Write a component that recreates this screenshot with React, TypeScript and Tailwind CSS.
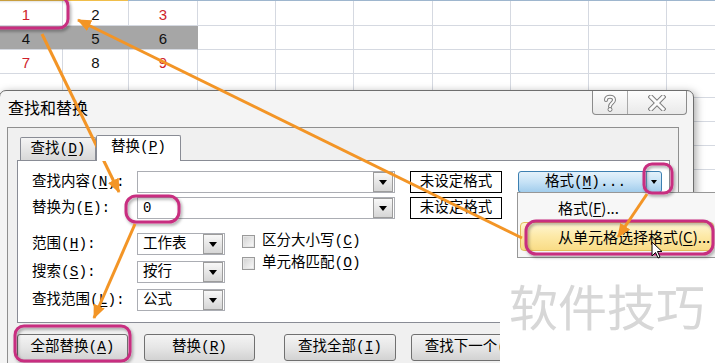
import React from "react";

const SONG = "font-['Liberation_Mono','Noto_Sans_CJK_SC',monospace]";
const HEI = "font-['Noto_Sans_CJK_SC',sans-serif]";

const COLS = [
  "w-[73px] -ml-[10px]",
  "w-[66px]",
  "w-[69px]",
  "w-[78px]",
  "w-[78px]",
  "w-[79px]",
  "w-[78px]",
  "w-[78px]",
  "w-[78px]",
  "w-[78px]",
];

type Cell = { t: string; red?: boolean };
const DATA: Cell[][] = [
  [{ t: "1", red: true }, { t: "2" }, { t: "3", red: true }],
  [{ t: "4" }, { t: "5" }, { t: "6" }],
  [{ t: "7", red: true }, { t: "8" }, { t: "9", red: true }],
];

function Sheet() {
  const rows = Array.from({ length: 15 }, (_, i) => i);
  return (
    <div className="flex flex-col">
      <div className="flex h-px">
        <div className="-ml-[10px] w-[138px] bg-[#f0be4a]" />
        <div className="flex-1 bg-[#9eb6ce]" />
      </div>
      {rows.map((r) => (
        <div key={r} className={`flex ${r === 0 ? "h-[25px]" : "h-[24px]"}`}>
          {COLS.map((c, ci) => {
            const cell = DATA[r]?.[ci];
            const gray = r === 1 && ci < 3;
            return (
              <div
                key={ci}
                className={`${c} shrink-0 flex items-center justify-center border-b border-r pt-[2px] font-['Liberation_Sans',sans-serif] text-[15px] leading-none ${
                  gray ? "bg-[#a6a6a6] border-r-[#a6a6a6] border-b-[#d5d9e1]" : "border-[#d5d9e1]"
                } ${cell?.red ? "text-[#cf1f2b]" : "text-[#111]"}`}
              >
                {cell?.t ?? ""}
              </div>
            );
          })}
        </div>
      ))}
    </div>
  );
}

function U({ c }: { c: string }) {
  return <span className="underline underline-offset-[2px]">{c}</span>;
}

function Tri() {
  return (
    <svg width="8" height="5" viewBox="0 0 8 5">
      <path d="M0 0H8L4 5Z" fill="#000" />
    </svg>
  );
}

function DropBtn() {
  return (
    <div className="flex h-[20px] w-[20px] shrink-0 items-center justify-center border border-[#9c9c9c] bg-linear-to-b from-[#f8f8f8] to-[#d6d6d6]">
      <Tri />
    </div>
  );
}

function HelpIcon() {
  return (
    <svg width="16" height="18" viewBox="0 0 16 18">
      <path d="M4 6 C4 1.5, 12 1.5, 12 6 C12 9, 8 9, 8 12.5" fill="none" stroke="#7d7d7d" strokeWidth="4" strokeLinecap="round" />
      <path d="M4 6 C4 1.5, 12 1.5, 12 6 C12 9, 8 9, 8 12.5" fill="none" stroke="#fbfbfb" strokeWidth="2" strokeLinecap="round" />
      <circle cx="8" cy="15.5" r="2" fill="#fbfbfb" stroke="#7d7d7d" strokeWidth="1" />
    </svg>
  );
}

function CloseIcon() {
  return (
    <svg width="18" height="16" viewBox="0 0 18 16">
      <path d="M3 2 L15 14 M15 2 L3 14" fill="none" stroke="#7d7d7d" strokeWidth="5" strokeLinecap="square" />
      <path d="M3 2 L15 14 M15 2 L3 14" fill="none" stroke="#fbfbfb" strokeWidth="3" strokeLinecap="square" />
    </svg>
  );
}

function Checkbox({ children }: { children: React.ReactNode }) {
  return (
    <div className="flex h-[22px] items-center">
      <div className="flex h-[13px] w-[13px] items-center justify-center border border-[#9a9a9a] bg-[#e6e6e6]">
        <div className="h-[9px] w-[9px] bg-linear-to-br from-[#d4d4d4] to-[#f7f7f7]" />
      </div>
      <span className="ml-[7px] text-[14.5px] leading-none text-black">{children}</span>
    </div>
  );
}

function Select({ value }: { value: string }) {
  return (
    <div className="flex h-[22px] w-[88px] items-center justify-between border border-[#abadb3] bg-white pl-[5px] pr-px">
      <span className="text-[14.5px] leading-none text-black">{value}</span>
      <DropBtn />
    </div>
  );
}

function Btn({ children, w }: { children: React.ReactNode; w: string }) {
  return (
    <div
      className={`${w} flex h-[27px] shrink-0 items-center justify-center whitespace-nowrap rounded-[3px] border border-[#707070] bg-linear-to-b from-[#f4f4f4] via-[#e6e6e6] to-[#d2d2d2] text-[14.5px] leading-none text-black`}
    >
      {children}
    </div>
  );
}

function Dialog() {
  return (
    <div
      className={`absolute left-[-1px] top-[90px] h-[290px] w-[695px] rounded-t-[7px] border border-[#6e6e6e] bg-[#f4f4f4] shadow-[2px_2px_8px_rgba(0,0,0,0.35)] ${SONG}`}
    >
      {/* title bar */}
      <div className="flex h-[36px] items-start">
        <span className={`ml-[8px] mt-[8px] text-[16px] leading-none text-black ${HEI}`}>查找和替换</span>
        <div className="ml-auto mr-[6px] flex h-[24px] overflow-hidden rounded-b-[4px] border border-t-0 border-[#8c8c8c] bg-linear-to-b from-[#fdfdfd] to-[#e9e9e9]">
          <div className="flex w-[35px] items-center justify-center border-r border-[#a9a9a9]">
            <HelpIcon />
          </div>
          <div className="flex w-[58px] items-center justify-center">
            <CloseIcon />
          </div>
        </div>
      </div>

      {/* client area */}
      <div className="ml-[7px] h-[260px] w-[672px] border border-b-0 border-[#8f8f8f] bg-[#f0f0f0]">
        {/* tabs */}
        <div className="flex h-[32px] items-end">
          <div className="ml-[12px] flex h-[23px] w-[76px] items-center justify-center rounded-t-[2px] border border-b-0 border-[#898c95] bg-linear-to-b from-[#f4f4f4] to-[#d8d8d8] text-[14.5px] leading-none text-black">
            查找(<U c="D" />)
          </div>
          <div className="relative z-10 -mb-px flex h-[26px] w-[85px] items-center justify-center rounded-t-[2px] border border-b-0 border-[#898c95] bg-white pb-[2px] text-[14.5px] leading-none text-black">
            替换(<U c="P" />)
          </div>
        </div>

        {/* panel */}
        <div className="ml-[9px] h-[163px] w-[653px] border border-[#898c95] bg-white pl-[14px] pt-[10px] text-black">
          {/* row 1 */}
          <div className="flex h-[22px] items-center">
            <span className="w-[105px] text-[14.5px] leading-none">
              查找内容(<U c="N" />):
            </span>
            <div className="flex h-[22px] w-[258px] items-center justify-end border border-[#abadb3] bg-white pr-px">
              <DropBtn />
            </div>
            <div className="ml-[15px] flex h-[22px] w-[92px] items-center justify-center border border-black bg-white text-[14.5px] leading-none">
              未设定格式
            </div>
            <div className="ml-[16px] flex h-[22px] w-[144px] overflow-hidden rounded-[3px] border border-[#3c7fb1] bg-linear-to-b from-[#e4f1fb] via-[#c6e2f6] to-[#a2cdec]">
              <div className="flex flex-1 items-center justify-center pl-[6px] text-[14.5px] leading-none">
                格式(<U c="M" />)...
              </div>
              <div className="flex w-[15px] items-center justify-center border-l border-[#6a9fc7]">
                <svg width="6" height="4" viewBox="0 0 6 4">
                  <path d="M0 0H6L3 4Z" fill="#000" />
                </svg>
              </div>
            </div>
          </div>
          {/* row 2 */}
          <div className="mt-[4px] flex h-[22px] items-center">
            <span className="w-[105px] text-[14.5px] leading-none">
              替换为(<U c="E" />):
            </span>
            <div className="flex h-[22px] w-[258px] items-center justify-between border border-[#abadb3] bg-white pl-[5px] pr-px">
              <span className="text-[14px] leading-none">0</span>
              <DropBtn />
            </div>
            <div className="ml-[15px] flex h-[22px] w-[92px] items-center justify-center border border-black bg-white text-[14.5px] leading-none">
              未设定格式
            </div>
          </div>
          {/* options */}
          <div className="mt-[14px] flex">
            <div className="flex flex-col gap-[6px]">
              <div className="flex items-center">
                <span className="w-[105px] text-[14.5px] leading-none">
                  范围(<U c="H" />):
                </span>
                <Select value="工作表" />
              </div>
              <div className="flex items-center">
                <span className="w-[105px] text-[14.5px] leading-none">
                  搜索(<U c="S" />):
                </span>
                <Select value="按行" />
              </div>
              <div className="flex items-center">
                <span className="w-[105px] text-[14.5px] leading-none">
                  查找范围(<U c="L" />):
                </span>
                <Select value="公式" />
              </div>
            </div>
            <div className="-mt-[3px] ml-[17px] flex flex-col">
              <Checkbox>
                区分大小写(<U c="C" />)
              </Checkbox>
              <Checkbox>
                单元格匹配(<U c="O" />)
              </Checkbox>
            </div>
          </div>
        </div>

        {/* buttons */}
        <div className="ml-[9px] mt-[11px] flex">
          <Btn w="w-[111px]">
            全部替换(<U c="A" />)
          </Btn>
          <div className="ml-[16px]">
            <Btn w="w-[111px]">
              替换(<U c="R" />)
            </Btn>
          </div>
          <div className="ml-[29px]">
            <Btn w="w-[112px]">
              查找全部(<U c="I" />)
            </Btn>
          </div>
          <div className="ml-[15px]">
            <Btn w="w-[126px]">
              查找下一个(<U c="F" />)
            </Btn>
          </div>
        </div>
      </div>
    </div>
  );
}

function Menu() {
  return (
    <div className={`absolute left-[517px] top-[192px] h-[66px] w-[210px] border border-[#979797] bg-[#f7f7f7] ${HEI}`}>
      <div className="flex h-[29px] items-center pl-[40px] text-[15px] leading-none text-black">
        格式(<span className="underline underline-offset-[2px]">F</span>)...
      </div>
      <div className="ml-[2px] flex h-[29px] w-[194px] items-center rounded-[4px] border border-[#e3bd5b] bg-linear-to-b from-[#fef5d2] via-[#fde9a6] to-[#f9dc86] pl-[37px] text-[15px] leading-none text-black">
        从单元格选择格式(<span className="underline underline-offset-[2px]">C</span>)...
      </div>
    </div>
  );
}

function Overlay() {
  return (
    <div className="absolute left-[500px] top-[256px] h-[107px] w-[215px] bg-white pl-[9px] pt-[24px]">
      <span className={`block text-[49px] leading-none text-[#d7d7d7] ${HEI}`}>软件技巧</span>
    </div>
  );
}

function Annotations() {
  const mag = "#c82f80";
  const org = "#f39526";
  return (
    <svg className="pointer-events-none absolute left-0 top-0" width="715" height="363" viewBox="0 0 715 363">
      <defs>
        <filter id="sh" x="-20%" y="-20%" width="140%" height="140%">
          <feDropShadow dx="1.5" dy="2" stdDeviation="1.5" floodColor="#000" floodOpacity="0.35" />
        </filter>
        <marker id="ah" markerUnits="userSpaceOnUse" markerWidth="14" markerHeight="12" refX="13" refY="6" orient="auto">
          <path d="M0 0 L14 6 L0 12 Z" fill={org} />
        </marker>
      </defs>
      <g fill="none" stroke={mag} strokeWidth="3" filter="url(#sh)">
        <rect x="-12" y="-3" width="80" height="31" rx="9" />
        <rect x="126" y="196" width="53" height="26" rx="10" />
        <rect x="644" y="164" width="28" height="29" rx="8" />
        <rect x="526" y="221" width="187" height="33" rx="10" />
        <rect x="15" y="326" width="115" height="35" rx="9" />
      </g>
      {/* cursor */}
      <path d="M652 242 L652 256 L655.5 252.5 L658 258 L660 257 L657.5 251.5 L662 251.5 Z" fill="#fff" stroke="#000" strokeWidth="1" />
      <g stroke={org} strokeWidth="3" fill="none" markerEnd="url(#ah)">
        <line x1="42" y1="34" x2="119" y2="192" />
        <line x1="135" y1="224" x2="94" y2="318" />
        <line x1="522" y1="238" x2="78" y2="20" />
        <line x1="647" y1="194" x2="618" y2="237" />
      </g>
    </svg>
  );
}

export default function App() {
  return (
    <div className="relative h-[363px] w-[715px] overflow-hidden bg-white">
      <Sheet />
      <Dialog />
      <Overlay />
      <Menu />
      <Annotations />
    </div>
  );
}
